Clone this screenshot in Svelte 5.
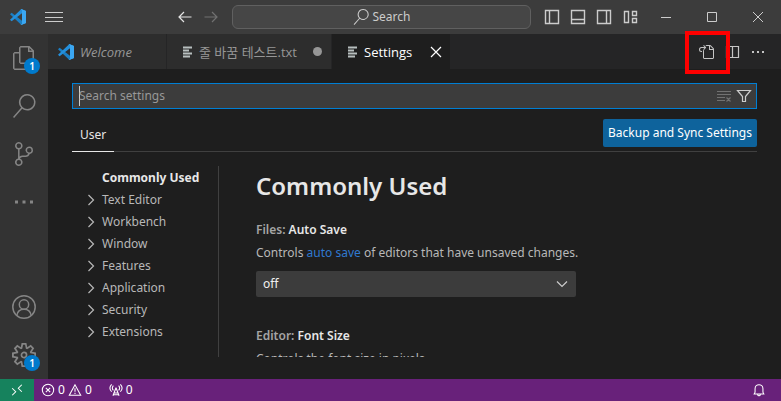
<script>
  const sections = ['Text Editor', 'Workbench', 'Window', 'Features', 'Application', 'Security', 'Extensions'];
  const saveModes = ['off', 'afterDelay', 'onFocusChange', 'onWindowChange'];

  const fills = {
    files: 'M17.5 0h-9L7 1.5V6H2.5L1 7.5v15.07L2.5 24h12.07L16 22.57V18h4.7l1.3-1.43V4.5L17.5 0zm0 2.12l2.38 2.38H17.5V2.12zm-3 20.38h-12v-15H7v9.07L8.5 18h6v4.5zm6-6h-12v-15H16V6h4.5v10.5z',
    search: 'M15.25 0a8.25 8.25 0 0 0-6.18 13.72L1 22.88l1.12 1 8.05-9.12A8.251 8.251 0 1 0 15.25.01V0zm0 15a6.75 6.75 0 1 1 0-13.5 6.75 6.75 0 0 1 0 13.5z',
    branch: 'M21.007 8.222A3.738 3.738 0 0 0 15.045 5.2a3.737 3.737 0 0 0 1.156 6.583 2.988 2.988 0 0 1-2.668 1.67h-2.99a4.456 4.456 0 0 0-2.989 1.165V7.4a3.737 3.737 0 1 0-1.494 0v9.117a3.776 3.776 0 1 0 1.816.099 2.99 2.99 0 0 1 2.668-1.667h2.99a4.484 4.484 0 0 0 4.223-3.039 3.736 3.736 0 0 0 3.25-3.687zM4.565 3.738a2.242 2.242 0 1 1 4.484 0 2.242 2.242 0 0 1-4.484 0zm4.484 16.441a2.242 2.242 0 1 1-4.484 0 2.242 2.242 0 0 1 4.484 0zm8.221-9.715a2.242 2.242 0 1 1 0-4.485 2.242 2.242 0 0 1 0 4.485z',
    more: 'M3 10.500h3v3H3zM10.500 10.500h3v3h-3zM18 10.500h3v3h-3z',
    gear: 'M19.85 8.75l4.15.83v4.84l-4.15.83 2.35 3.52-3.43 3.43-3.52-2.35-.83 4.15H9.58l-.83-4.15-3.52 2.35-3.43-3.43 2.35-3.52L0 14.42V9.58l4.15-.83L1.8 5.23 5.23 1.8l3.52 2.35L9.58 0h4.84l.83 4.15 3.52-2.35 3.43 3.43-2.35 3.52zm-1.57 5.07l4-.81v-2l-4-.81-.54-1.3 2.29-3.43-1.43-1.43-3.43 2.29-1.3-.54-.81-4h-2l-.81 4-1.3.54-3.43-2.29-1.43 1.43L6.38 8.9l-.54 1.3-4 .81v2l4 .81.54 1.3-2.29 3.43 1.43 1.43 3.43-2.29 1.3.54.81 4h2l.81-4 1.3-.54 3.43 2.29 1.43-1.43-2.29-3.43.54-1.3zm-8.186-4.672A3.43 3.43 0 0 1 12 8.57 3.44 3.44 0 0 1 15.43 12a3.43 3.43 0 1 1-5.336-2.852zm.956 4.274c.281.188.612.288.95.288A1.7 1.7 0 0 0 13.71 12a1.71 1.71 0 1 0-2.66 1.422z'
  };

  const lines = {
    left: 'M14.5 8H2M7 3L2 8l5 5',
    right: 'M1.500 8H14M9 3l5 5-5 5',
    sidebarLeft: 'M1.500 1.500h13v13h-13zM5.500 1.500v13',
    panel: 'M1.500 1.500h13v13h-13zM1.500 10.500h13',
    sidebarRight: 'M1.500 1.500h13v13h-13zM10.500 1.500v13',
    layout: 'M2.500 2.500h4v11h-4zM10.500 2.500h4v4h-4zM10.500 9.500h4v4h-4z',
    minimize: 'M3 8.500h10',
    maximize: 'M3.500 3.500h9v9h-9z',
    close: 'M3 3l10 10M13 3L3 13',
    split: 'M2.500 2.500h12v11h-12zM8.500 2.500v11',
    chevronRight: 'M5.500 3l5 5-5 5',
    chevronDown: 'M3 5.500l5 5 5-5',
    filter: 'M1.500 2.500h13l-5 6v5h-3v-5z',
    clear: 'M1 3.500h14M1 6.500h14M1 9.500h8M1 12.500h8M10.500 9.500l4 4M14.500 9.500l-4 4',
    remote: 'M2.500 6l4 4-4 4M13.500 2l-4 4 4 4',
    error: 'M8 1.500a6.500 6.500 0 1 0 0 13 6.500 6.500 0 0 0 0-13zM5.500 5.500l5 5M10.500 5.500l-5 5',
    warning: 'M8 2L1.500 14h13zM8 6v4M8 11v1.500',
    tower: 'M8 5.500L4.500 14.500M8 5.500l3.500 9M6 11.500h4M5 13.500h6M5 3c-1.300 1.500-1.300 4 0 5.500M11 3c1.300 1.500 1.300 4 0 5.500M3 1.500c-2.300 2.500-2.300 6 0 8.500M13 1.500c2.300 2.500 2.300 6 0 8.500',
    bell: 'M2.500 12.500h11l-1-2v-4c0-6-9-6-9 0v4zM6.500 13c0 2 3 2 3 0'
  };
</script>

{#snippet solid(name)}
  <svg class="big" viewBox="0 0 24 24" aria-hidden="true"><path d={fills[name]} /></svg>
{/snippet}

{#snippet line(name)}
  <svg class="small" viewBox="0 0 16 16" aria-hidden="true"><path d={lines[name]} /></svg>
{/snippet}

{#snippet logo()}
  <svg class="logo" viewBox="0 0 16 16" aria-hidden="true">
    <path fill="#1b7fc4" d="M0 5.200L1.600 3.800 12 11.800v3.700l-.8.300z" />
    <path fill="#2490dc" d="M0 10.800l1.600 1.400L12 4.200V.5l-.8-.3z" />
    <path fill="#3ba7f2" d="M11.400 0L16 2v12l-4.600 2-.9-.4L12 15V1L10.500.4z" />
    <path fill="#3ba7f2" d="M12 .4l4 1.600v12l-4 1.600z" />
  </svg>
{/snippet}

{#snippet textIcon()}
  <svg class="file" viewBox="0 0 16 16" aria-hidden="true"><path d="M6 3.500h9M6 6.500h6M6 9.500h9M6 12.500h7" /></svg>
{/snippet}

<div class="window">
  <header class="titlebar">
    <div class="title-left">
      {@render logo()}
      <button class="menu" aria-label="Application menu">
        <svg viewBox="0 0 18 16" aria-hidden="true"><path d="M0 3.500h18M0 8.500h18M0 12.500h18" /></svg>
      </button>
      <div class="nav">
        <button class="bright" aria-label="Go back">{@render line('left')}</button>
        <button class="faded" aria-label="Go forward">{@render line('right')}</button>
      </div>
    </div>
    <button class="command">
      <svg class="lens" viewBox="0 0 24 24" aria-hidden="true"><path d={fills.search} /></svg>
      <span>Search</span>
    </button>
    <div class="layout-tools">
      <button aria-label="Toggle primary side bar">{@render line('sidebarLeft')}</button>
      <button aria-label="Toggle panel">{@render line('panel')}</button>
      <button aria-label="Toggle secondary side bar">{@render line('sidebarRight')}</button>
      <button aria-label="Customize layout">{@render line('layout')}</button>
    </div>
    <div class="controls">
      <button aria-label="Minimize">{@render line('minimize')}</button>
      <button aria-label="Maximize">{@render line('maximize')}</button>
      <button aria-label="Close window">{@render line('close')}</button>
    </div>
  </header>

  <div class="workspace">
    <nav class="activity" aria-label="Views">
      <button aria-label="Explorer">{@render solid('files')}<span class="badge">1</span></button>
      <button aria-label="Search files">{@render solid('search')}</button>
      <button aria-label="Source control">{@render solid('branch')}</button>
      <button aria-label="Additional views">{@render solid('more')}</button>
      <span class="spacer"></span>
      <button aria-label="Accounts">
        <svg class="account" viewBox="0 0 24 24" aria-hidden="true">
          <circle cx="12" cy="12" r="11.200" /><circle cx="12" cy="9.500" r="4.700" />
          <path d="M4.800 20.500c.5-3.600 3.200-6.300 7.200-6.300s6.700 2.700 7.200 6.300" />
        </svg>
      </button>
      <button aria-label="Manage">{@render solid('gear')}<span class="badge">1</span></button>
    </nav>

    <main class="editor">
      <div class="tabs">
        <div class="tab">
          {@render logo()}<span class="name"><em>Welcome</em></span><span class="tail"></span>
        </div>
        <div class="tab">
          {@render textIcon()}<span class="name">줄 바꿈 테스트.txt</span><span class="tail"><i class="dot"></i></span>
        </div>
        <div class="tab active">
          {@render textIcon()}<span class="name">Settings</span>
          <button class="tail" aria-label="Close tab">{@render line('close')}</button>
        </div>
        <div class="actions">
          <button class="marked" aria-label="Open settings (JSON)">
            <svg class="dots" viewBox="0 0 16 16" aria-hidden="true"><path d="M6 5.914l2.060-2.060v-.708L5.915 1l-.707.707.043.043.25.25 1 1h-3a2.500 2.500 0 0 0 0 5H4V7h-.5a1.500 1.500 0 1 1 0-3h3L5.207 5.293 5.914 6 6 5.914zM11 2H8.328l-1-1H12l.71.290 3 3L16 5v9l-1 1H6l-1-1V6.500l1-.847V14h9V6h-4V2zm1 0v3h3l-3-3z" /></svg>
            <span class="marker"></span>
          </button>
          <button aria-label="Split editor">{@render line('split')}</button>
          <button aria-label="More actions">
            <svg class="dots" viewBox="0 0 16 16" aria-hidden="true"><path d="M2 7h2v2H2zM7 7h2v2H7zM12 7h2v2h-2z" /></svg>
          </button>
        </div>
      </div>

      <div class="settings">
        <div class="searchbox">
          <span class="caret"></span>
          <input type="text" aria-label="Search settings" placeholder="Search settings" />
          <button class="faded" aria-label="Clear search">{@render line('clear')}</button>
          <button aria-label="Filter settings">{@render line('filter')}</button>
        </div>

        <div class="scope">
          <button class="user">User</button>
          <button class="sync">Backup and Sync Settings</button>
        </div>

        <div class="columns">
          <ul class="toc">
            <li class="current"><button>Commonly Used</button></li>
            {#each sections as section}
              <li><button>{@render line('chevronRight')}{section}</button></li>
            {/each}
          </ul>
          <section class="list">
            <h1>Commonly Used</h1>
            <div class="setting">
              <label for="autosave"><span>Files:</span> Auto Save</label>
              <p>Controls <a href="#autosave">auto save</a> of editors that have unsaved changes.</p>
              <div class="select">
                <select id="autosave">
                  {#each saveModes as mode}<option>{mode}</option>{/each}
                </select>
                {@render line('chevronDown')}
              </div>
            </div>
            <div class="setting">
              <h2><span>Editor:</span> Font Size</h2>
              <p>Controls the font size in pixels.</p>
            </div>
          </section>
        </div>
      </div>
    </main>
  </div>

  <footer class="status">
    <button class="remote" aria-label="Open a remote window">{@render line('remote')}</button>
    <button class="problems">{@render line('error')}<span>0</span>{@render line('warning')}<span>0</span></button>
    <button class="ports">{@render line('tower')}<span>0</span></button>
    <button class="bell" aria-label="Notifications">{@render line('bell')}</button>
  </footer>
</div>

<style>
  :global(body) {
    margin: 0;
    background: #1e1e1e;
  }

  .window {
    display: flex;
    flex-direction: column;
    height: 100vh;
    overflow: hidden;
    background: #1e1e1e;
    color: #b8b8b8;
    font: 12px/18px 'Noto Sans', 'Noto Sans CJK KR', sans-serif;
  }

  .window * {
    box-sizing: border-box;
  }

  button {
    display: flex;
    align-items: center;
    justify-content: center;
    padding: 0;
    border: 0;
    background: none;
    color: inherit;
    font: inherit;
    white-space: nowrap;
  }

  svg {
    display: block;
    flex: none;
  }

  .small,
  .logo,
  .file,
  .dots,
  .lens {
    width: 16px;
    height: 16px;
  }

  .small path,
  .menu path {
    fill: none;
    stroke: currentColor;
    stroke-width: 1.2;
  }

  .file path {
    stroke: #b8bfbf;
    stroke-width: 2;
  }

  .dots path,
  .lens path,
  .big path {
    fill: currentColor;
  }

  .faded {
    color: #717171;
  }

  /* title bar */
  .titlebar {
    display: flex;
    flex: none;
    align-items: center;
    height: 34px;
    background: #3c3c3c;
    color: #cccccc;
  }

  .title-left {
    display: flex;
    align-items: center;
    width: 232px;
    padding: 0 13px 0 10px;
  }

  .menu {
    margin-left: 19px;
  }

  .menu svg {
    width: 18px;
    height: 16px;
  }

  .nav {
    display: flex;
    gap: 10px;
    margin-left: auto;
  }

  .bright {
    color: #e4e4e4;
  }

  .command {
    flex: 1;
    gap: 4px;
    height: 24px;
    border: 1px solid #606060;
    border-radius: 6px;
    background: #464646;
  }

  .layout-tools {
    display: flex;
    padding-left: 8px;
  }

  .layout-tools button {
    width: 26px;
    height: 22px;
  }

  .layout-tools :global(path) {
    stroke-width: 1.4;
  }

  .controls {
    display: flex;
  }

  .controls button {
    width: 46px;
    height: 34px;
  }

  .controls :global(path) {
    stroke-width: 1;
  }

  /* activity bar */
  .workspace {
    display: flex;
    flex: 1;
    min-height: 0;
  }

  .activity {
    display: flex;
    flex: none;
    flex-direction: column;
    width: 48px;
    background: #333333;
    color: #858585;
  }

  .activity button {
    position: relative;
    height: 48px;
  }

  .big,
  .account {
    width: 24px;
    height: 24px;
  }

  .account {
    fill: none;
    stroke: currentColor;
    stroke-width: 1.5;
  }

  .spacer {
    flex: 1;
  }

  .badge {
    position: absolute;
    top: 24px;
    right: 8px;
    width: 16px;
    border-radius: 8px;
    background: #007acc;
    color: #ffffff;
    font-size: 10px;
    font-weight: 600;
    line-height: 16px;
    text-align: center;
  }

  /* tabs */
  .editor {
    display: flex;
    flex: 1;
    flex-direction: column;
    min-width: 0;
  }

  .tabs {
    display: flex;
    flex: none;
    height: 35px;
    background: #252526;
    font-family: 'Open Sans', 'Noto Sans CJK KR', sans-serif;
    font-size: 13px;
  }

  .tab {
    display: flex;
    align-items: center;
    min-width: 119px;
    padding-left: 10px;
    border-right: 1px solid #252526;
    background: #2d2d2d;
    color: #969696;
    white-space: nowrap;
  }

  .tab.active {
    background: #1e1e1e;
    color: #ffffff;
  }

  .name {
    padding: 0 6px;
  }

  .tail {
    display: flex;
    align-items: center;
    justify-content: center;
    width: 28px;
    margin-left: auto;
  }

  .dot {
    width: 9px;
    height: 9px;
    border-radius: 50%;
    background: #969696;
  }

  .actions {
    display: flex;
    gap: 4px;
    margin-left: auto;
    padding-right: 12px;
    color: #c5c5c5;
  }

  .actions button {
    width: 22px;
  }

  .marked {
    position: relative;
  }

  .marker {
    position: absolute;
    top: -3px;
    left: -10px;
    width: 45px;
    height: 43px;
    border: 4px solid #ff0000;
    z-index: 1;
  }

  /* settings editor */
  .settings {
    display: flex;
    flex: 1;
    flex-direction: column;
    min-height: 0;
    padding: 14px 24px 22px;
  }

  .searchbox {
    display: flex;
    flex: none;
    align-items: center;
    gap: 4px;
    height: 26px;
    padding: 0 4px 0 6px;
    border: 1px solid #007fd4;
    background: #3c3c3c;
    color: #cccccc;
  }

  .caret {
    width: 1px;
    height: 20px;
    margin-right: -5px;
    background: #cccccc;
  }

  input {
    flex: 1;
    min-width: 0;
    padding: 0;
    border: 0;
    outline: 0;
    background: none;
    color: #cccccc;
    font: inherit;
  }

  input::placeholder {
    color: #989898;
    opacity: 1;
  }

  .scope {
    display: flex;
    flex: none;
    align-items: flex-end;
    justify-content: space-between;
    height: 43px;
    border-bottom: 1px solid #404040;
  }

  .user {
    height: 33px;
    margin-bottom: -1px;
    padding: 0 8px;
    border-bottom: 1px solid #e7e7e7;
    color: #e7e7e7;
  }

  .sync {
    height: 28px;
    margin-bottom: 4px;
    padding: 0 5px;
    border-radius: 2px;
    background: #0e639c;
    color: #ffffff;
  }

  .columns {
    display: flex;
    flex: 1;
    min-height: 0;
    margin-top: 14px;
    overflow: hidden;
  }

  .toc {
    flex: none;
    width: 147px;
    margin: 0;
    padding: 1px 0 0 11px;
    border-right: 1px solid #404040;
    list-style: none;
  }

  .toc button {
    gap: 3px;
    height: 22px;
  }

  .toc .current button {
    padding-left: 19px;
    color: #e7e7e7;
    font-weight: 700;
  }

  .list {
    flex: 1;
    min-width: 0;
    padding-left: 37px;
  }

  h1 {
    margin: 0;
    padding-top: 3px;
    color: #e7e7e7;
    font-size: 24px;
    font-weight: 600;
    line-height: 34px;
  }

  .setting {
    padding: 18px 0 12px;
  }

  .setting label,
  .setting h2 {
    display: block;
    margin: 0;
    color: #e7e7e7;
    font-size: 12px;
    font-weight: 600;
    line-height: 18px;
  }

  .setting label span,
  .setting h2 span {
    color: #a5a5a5;
  }

  .setting p {
    margin: 5px 0 9px;
    white-space: nowrap;
  }

  a {
    color: #3079cf;
    text-decoration: none;
  }

  .select {
    display: flex;
    align-items: center;
    max-width: 320px;
    height: 26px;
    padding-right: 6px;
    border-radius: 2px;
    background: #3c3c3c;
    color: #cccccc;
  }

  select {
    flex: 1;
    padding: 0 7px;
    border: 0;
    appearance: none;
    background: none;
    color: #f0f0f0;
    font: inherit;
  }

  /* status bar */
  .status {
    display: flex;
    flex: none;
    height: 22px;
    background: #68217a;
    color: #ffffff;
  }

  .remote {
    width: 34px;
    background: #16825d;
  }

  .problems,
  .ports {
    gap: 3px;
    padding-left: 7px;
  }

  .ports {
    padding-left: 17px;
  }

  .status .small {
    width: 14px;
    height: 14px;
  }

  .bell {
    margin-left: auto;
    padding-right: 15px;
  }
</style>
